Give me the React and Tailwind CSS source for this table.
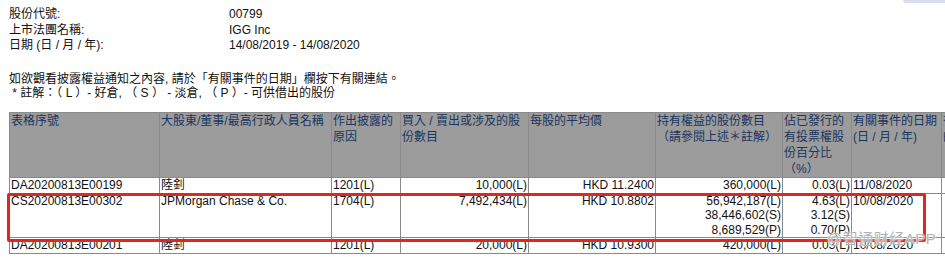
import React from 'react';

const FONT = { fontFamily: '"Liberation Sans", Arial, "Noto Sans CJK TC", sans-serif' };

const COLS = [150, 172, 69, 128, 127, 127, 69, 90, 60];

const HEADERS = [
  '表格序號',
  '大股東/董事/最高行政人員名稱',
  '作出披露的原因',
  '買入 / 賣出或涉及的股份數目',
  '每股的平均價',
  '持有權益的股份數目（請參閱上述＊註解）',
  '佔已發行的有投票權股份百分比（%）',
  '有關事件的日期(日 / 月 / 年)',
  '有關事件的詳細',
];

const ROWS = [
  {
    id: 'DA20200813E00199',
    name: '陸釗',
    reason: '1201(L)',
    shares: '10,000(L)',
    price: 'HKD 11.2400',
    held: ['360,000(L)'],
    pct: ['0.03(L)'],
    date: '11/08/2020',
  },
  {
    id: 'CS20200813E00302',
    name: 'JPMorgan Chase & Co.',
    reason: '1704(L)',
    shares: '7,492,434(L)',
    price: 'HKD 10.8802',
    held: ['56,942,187(L)', '38,446,602(S)', '8,689,529(P)'],
    pct: ['4.63(L)', '3.12(S)', '0.70(P)'],
    date: '10/08/2020',
  },
  {
    id: 'DA20200813E00201',
    name: '陸釗',
    reason: '1201(L)',
    shares: '20,000(L)',
    price: 'HKD 10.9300',
    held: ['420,000(L)'],
    pct: ['0.03(L)'],
    date: '10/08/2020',
  },
];

function HeaderCell({ children }) {
  return (
    <th className="border border-[#8a8a8a] bg-[#9c9c9c] px-px align-top text-left font-normal text-[#1a355f] leading-[16px] h-[65px]">
      {children}
    </th>
  );
}

function Cell({ children, right }) {
  return (
    <td className={`border border-[#8a8a8a] px-px align-top leading-[14.5px] text-[#111] whitespace-nowrap ${right ? 'text-right' : 'text-left'}`}>
      {children}
    </td>
  );
}

function Lines({ items }) {
  return items.map((t) => <div key={t}>{t}</div>);
}

export default function App() {
  return (
    <div className="relative w-[945px] h-[257px] overflow-hidden bg-white text-[12px] text-[#111]" style={FONT}>
      <div className="absolute right-0 top-0 h-[3px] w-[42px] bg-[#dcdcef] rounded-bl" />

      <div className="pl-[9px] pt-[7px] leading-[15.5px]">
        <div className="flex">
          <span className="w-[220px]">股份代號:</span>
          <span>00799</span>
        </div>
        <div className="flex">
          <span className="w-[220px]">上市法團名稱:</span>
          <span>IGG Inc</span>
        </div>
        <div className="flex">
          <span className="w-[220px]">日期 (日 / 月 / 年):</span>
          <span>14/08/2019 - 14/08/2020</span>
        </div>
        <div className="mt-[18px]">如欲觀看披露權益通知之內容, 請於「有關事件的日期」欄按下有關連結。</div>
        <div className="leading-[13px]">&nbsp;* 註解：（ L ）- 好倉, （ S ） - 淡倉, （ P ）- 可供借出的股份</div>
      </div>

      <table className="ml-[9px] mt-[12px] border-collapse table-fixed w-[992px]">
        <colgroup>
          {COLS.map((w, i) => (
            <col key={i} style={{ width: w }} />
          ))}
        </colgroup>
        <thead>
          <tr>
            {HEADERS.map((h) => (
              <HeaderCell key={h}>{h}</HeaderCell>
            ))}
          </tr>
        </thead>
        <tbody>
          {ROWS.map((r) => (
            <tr key={r.id}>
              <Cell>{r.id}</Cell>
              <Cell>{r.name}</Cell>
              <Cell>{r.reason}</Cell>
              <Cell right>{r.shares}</Cell>
              <Cell right>{r.price}</Cell>
              <Cell right><Lines items={r.held} /></Cell>
              <Cell right><Lines items={r.pct} /></Cell>
              <Cell>{r.date}</Cell>
              <Cell>&nbsp;</Cell>
            </tr>
          ))}
        </tbody>
      </table>

      <div className="absolute left-[7px] top-[193px] w-[919px] h-[49px] border-[3px] border-[#e3241f] rounded-[2px]" />

      <div
        className="absolute left-[827px] top-[228px] text-[15px] text-[#b4b4b4] tracking-[0.5px]"
        style={{ ...FONT, textShadow: '0 0 1px #fff, 0 0 2px #fff' }}
      >
        @智通财经APP
      </div>
    </div>
  );
}
